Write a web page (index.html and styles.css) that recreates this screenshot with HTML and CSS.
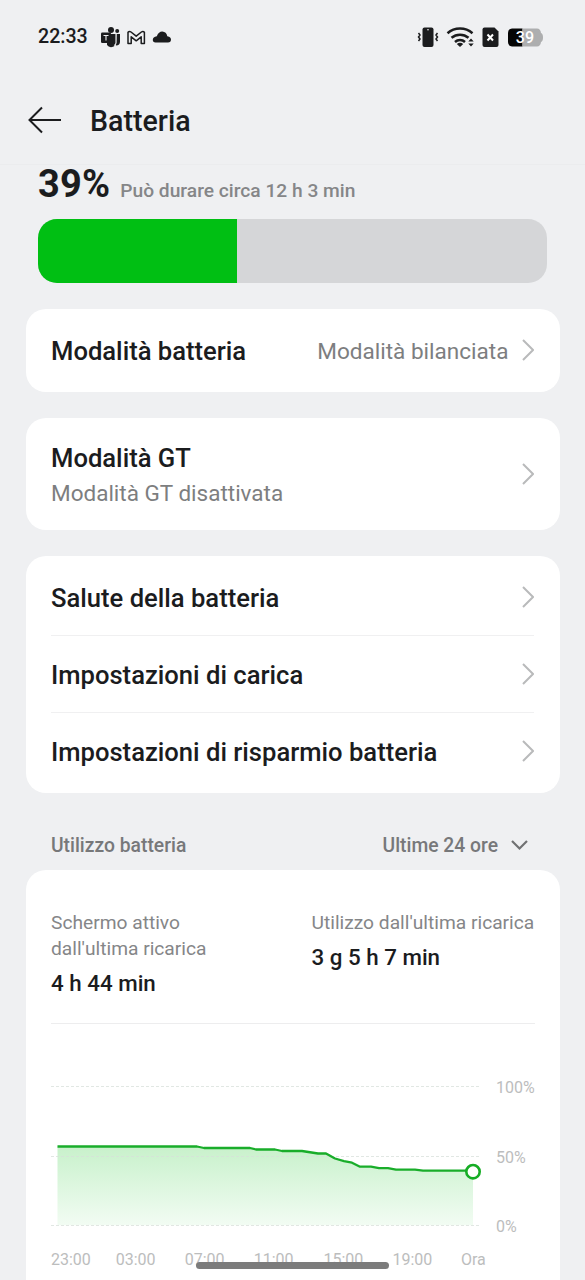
FILE: index.html
```html
<!DOCTYPE html>
<html lang="it">
<head>
<meta charset="utf-8">
<title>Batteria</title>
<link rel="stylesheet" href="styles.css">
</head>
<body>
<div class="screen">
  <div class="status">
    <span class="clock">22:33</span>
    <svg class="status-left" width="72" height="24" viewBox="0 0 72 24">
      <g fill="#1b1c1e">
        <circle cx="11" cy="5" r="3"/><circle cx="17.2" cy="6" r="2"/>
        <path d="M7 9h9v9a5 5 0 0 1-9 2z"/><path d="M16.5 9h3.500v7.500a4 4 0 0 1-4 4z"/>
        <rect x="1" y="7.500" width="10" height="10.500" rx="1.200"/>
        <path d="M55.500 17.500q-2.700-.2-2.700-2.800 0-3 4-3.500c1.300-3.200 3.300-4.700 5.500-4.600 2.700.1 4.500 2 5 4.600 2.700.3 3.700 1.700 3.700 3.300 0 2-1 3-3 3z"/>
      </g>
      <path d="M3.500 10.500h5M6 10.500v5M16 9v9q-.3 1.800-2 2.500" fill="none" stroke="#eff0f2" stroke-width="1.100"/>
      <path d="M28 18.500V7.300q1.300-1.600 3-.3l5.200 4.200L41.400 7q1.700-1.300 3 .3v11.200h-3.200v-6.700l-5 4-5-4v6.700z" fill="none" stroke="#1b1c1e" stroke-width="1.500" stroke-linejoin="round"/>
    </svg>
    <svg class="status-right" width="128" height="24" viewBox="0 0 128 24">
      <rect x="6.500" y="2.500" width="11" height="19.500" rx="2" fill="#1b1c1e"/>
      <circle cx="12" cy="4.800" r=".8" fill="#eff0f2"/>
      <path d="M2.500 8l1.500 2-1.500 2L4 14l-1.500 2M21.500 8L20 10l1.500 2-1.500 2 1.500 2" fill="none" stroke="#1b1c1e" stroke-width="1.500"/>
      <g fill="none" stroke="#1b1c1e" stroke-width="2.500">
        <path d="M31.500 8.300a19 19 0 0 1 25 0"/><path d="M35.500 12.800a13 13 0 0 1 17 0"/><path d="M39 17a7.500 7.500 0 0 1 10 0"/>
      </g>
      <path d="M40.800 19a5 5 0 0 1 6.400 0L44 22zM52.300 16.500l2.700-3 2.700 3zM52.300 18.500h5.400l-2.700 3z" fill="#1b1c1e"/>
      <path d="M68.500 2.500h10l4 4V20q0 2-2 2h-12q-2 0-2-2V4.500q0-2 2-2z" fill="#1b1c1e"/>
      <path d="M71.500 9.500l5.500 6M77 9.500l-5.500 6" stroke="#fff" stroke-width="2"/>
      <path d="M96 3.500h10.500v18H96q-4-.3-4-4.500V8q0-4.200 4-4.500z" fill="#050505"/>
      <path d="M106.500 3.500H121q3.500.2 4 4.500 2 .8 2 4.500t-2 4.500q-.5 4.300-4 4.500h-14.500z" fill="#adaeaf"/>
      <text class="battery-level" x="108.900" y="18.200" text-anchor="middle">39</text>
    </svg>
  </div>

  <header class="header">
    <svg width="34" height="28" viewBox="0 0 34 28"><path d="M14 1.500L1.500 14 14 26.500M1.500 14H33" fill="none" stroke="#1b1c1e" stroke-width="2"/></svg>
    <h1>Batteria</h1>
  </header>

  <section class="summary">
    <div class="summary-line"><strong>39%</strong><span>Può durare circa 12 h 3 min</span></div>
    <div class="level"><div class="level-fill" style="width:39%"></div></div>
  </section>

  <section class="card single">
    <span class="title">Modalità batteria</span><span class="value">Modalità bilanciata</span>
    <svg class="chevron" viewBox="0 0 12 22"><path d="M1 1l10 10L1 21"/></svg>
  </section>

  <section class="card double">
    <div class="stack"><span class="title">Modalità GT</span><span class="subtitle">Modalità GT disattivata</span></div>
    <svg class="chevron" viewBox="0 0 12 22"><path d="M1 1l10 10L1 21"/></svg>
  </section>

  <section class="card list">
    <div class="row"><span class="title">Salute della batteria</span><svg class="chevron" viewBox="0 0 12 22"><path d="M1 1l10 10L1 21"/></svg></div>
    <div class="row"><span class="title">Impostazioni di carica</span><svg class="chevron" viewBox="0 0 12 22"><path d="M1 1l10 10L1 21"/></svg></div>
    <div class="row"><span class="title">Impostazioni di risparmio batteria</span><svg class="chevron" viewBox="0 0 12 22"><path d="M1 1l10 10L1 21"/></svg></div>
  </section>

  <div class="usage-head">
    <span>Utilizzo batteria</span><span class="range">Ultime 24 ore</span>
    <svg width="17" height="11" viewBox="0 0 17 11"><path d="M1 1l7.500 7.500L16 1" fill="none" stroke="#707173" stroke-width="2.200"/></svg>
  </div>

  <section class="card usage">
    <div class="stats">
      <div class="stat"><span class="stat-label">Schermo attivo<br>dall'ultima ricarica</span><span class="stat-value">4 h 44 min</span></div>
      <div class="stat"><span class="stat-label">Utilizzo dall'ultima ricarica</span><span class="stat-value">3 g 5 h 7 min</span></div>
    </div>
    <svg class="chart" width="534" height="256" viewBox="26 1024 534 256">
      <defs><linearGradient id="area" x1="0" y1="0" x2="0" y2="1"><stop offset="0" stop-color="#c8f1cb"/><stop offset="1" stop-color="#f2fcf3"/></linearGradient></defs>
      <path fill="url(#area)" d="M57.500 1146.500H197l7 1.500h46l6 1.500h19l7 1.500h20l16 2.500h8l9 5 9 2.700 8 1.500 8 4h11l8 1.500h9l8 1.500h19l8 1H473v54.500H57.500z"/>
      <g class="grid"><path d="M51 1086.500H480"/><path d="M51 1156.500H480"/><path d="M51 1225.500H480"/></g>
      <path class="trace" d="M57.500 1146.500H197l7 1.500h46l6 1.500h19l7 1.500h20l16 2.500h8l9 5 9 2.700 8 1.500 8 4h11l8 1.500h9l8 1.500h19l8 1H473"/>
      <circle cx="473" cy="1171.700" r="6.700" fill="#fff" stroke="#16ad25" stroke-width="2.600"/>
      <g class="axis">
        <text x="496" y="1093">100%</text><text x="496" y="1162.500">50%</text><text x="496" y="1232">0%</text>
        <text x="51" y="1265">23:00</text><text x="115.700" y="1265">03:00</text><text x="184.700" y="1265">07:00</text><text x="253.700" y="1265">11:00</text><text x="323.500" y="1265">15:00</text><text x="392.500" y="1265">19:00</text><text x="461" y="1265">Ora</text>
      </g>
    </svg>
  </section>
  <div class="home-bar"></div>
</div>
</body>
</html>
```
FILE: styles.css
```css
* { box-sizing: border-box; }
body { margin: 0; background: #eff0f2; color: #1b1c1e; font-family: Roboto, sans-serif; }
.screen { position: relative; width: 585px; height: 1280px; overflow: hidden; }
.status { display: flex; align-items: center; height: 73px; padding: 0 41.500px 0 38px; }
.clock { font-size: 19.600px; font-weight: 500; }
.status-left { margin-left: 12px; }
.status-right { margin-left: auto; }
.battery-level { font-size: 16px; font-weight: 500; fill: #fff; }
.header { display: flex; align-items: center; height: 91px; padding: 3px 28px 0; gap: 28px; }
h1 { margin: 0; padding-top: 1px; font-size: 28.600px; font-weight: 500; line-height: 34px; }
.summary { height: 145px; padding: 0 38px; border-top: 1px solid #ebecee; }
.summary-line { display: flex; align-items: baseline; gap: 10px; height: 54px; padding-top: 1px; line-height: 37px; }
.summary-line strong { font-size: 38px; font-weight: 700; letter-spacing: .2px; }
.summary-line span { font-size: 19.200px; font-weight: 500; color: #858688; }
.level { height: 64px; width: 509px; border-radius: 19px; overflow: hidden; background: #d5d6d8; }
.level-fill { height: 100%; background: #00bf13; }
.card { width: 534px; margin: 0 0 26px 25.500px; padding: 0 25.500px; border-radius: 20px; background: #fff; }
.single { display: flex; align-items: center; height: 82.500px; }
.single .title { padding-top: 2px; }
.double { display: flex; align-items: center; height: 112.500px; justify-content: space-between; }
.title { font-size: 25.600px; font-weight: 500; line-height: 32px; }
.value { margin: 0 13px 0 auto; padding-top: 1.500px; font-size: 22.550px; color: #7d7e80; }
.stack { display: flex; flex-direction: column; gap: 4px; padding-top: 2px; }
.subtitle { font-size: 22.500px; line-height: 30px; color: #7d7e80; }
.chevron { flex: none; width: 12px; height: 22px; margin-right: .5px; fill: none; stroke: #b9babb; stroke-width: 2; }
.list { height: 237px; padding-top: 3px; }
.row { display: flex; align-items: center; justify-content: space-between; height: 77px; border-bottom: 1px solid #f0f0f1; }
.row .title { padding-top: 2px; }
.row:last-child { border: 0; height: 76px; }
.usage-head { display: flex; align-items: center; height: 51px; padding: 1px 57px 0 51px; font-size: 19.300px; font-weight: 500; color: #77787a; }
.range { margin-left: auto; margin-right: 13px; }
.usage { height: 430px; margin-bottom: 0; padding: 0; }
.stats { display: grid; grid-template-columns: 260.500px 1fr; height: 154px; margin: 0 25px 0 25.500px; padding-top: 40px; border-bottom: 1px solid #ededee; }
.stat { display: flex; flex-direction: column; gap: 7px; }
.stat-label { font-size: 19.200px; line-height: 26px; color: #858688; white-space: nowrap; }
.stat-value { font-size: 22.350px; line-height: 28px; font-weight: 500; }
.chart { display: block; margin-left: .5px; }
.grid { stroke: #d8e0da; stroke-width: 1; stroke-dasharray: 3 2; opacity: .75; }
.trace { fill: none; stroke: #19ad2a; stroke-width: 2.300; stroke-linejoin: round; }
.axis { font-size: 16px; fill: #bcbdbd; }
.home-bar { position: absolute; left: 196px; top: 1262px; width: 193px; height: 7px; border-radius: 4px; background: #7c7c7c; }
```
